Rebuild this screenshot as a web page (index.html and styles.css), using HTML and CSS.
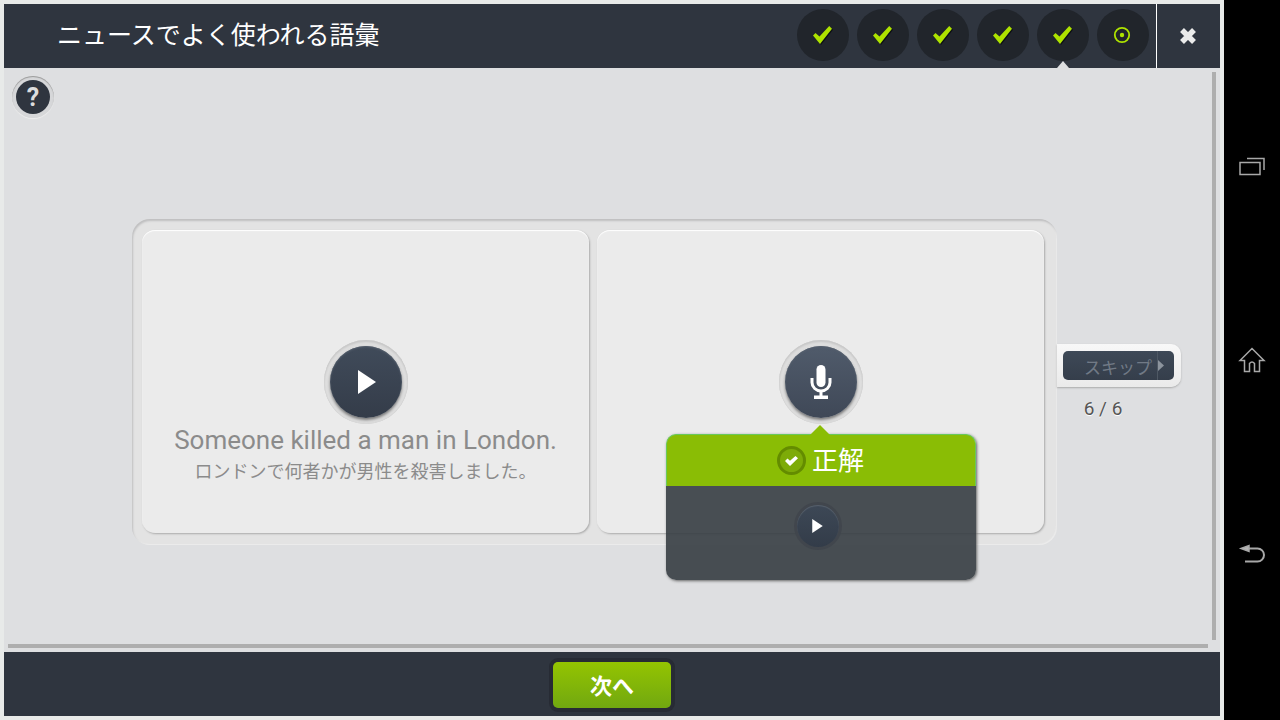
FILE: index.html
```
<!DOCTYPE html>
<html lang="ja">
<head>
<meta charset="UTF-8">
<meta name="viewport" content="width=device-width, initial-scale=1">
<title>ニュースでよく使われる語彙</title>
<link rel="stylesheet" href="styles.css">
</head>
<body>
	<svg class="defs" aria-hidden="true">
		<symbol id="check" viewBox="0 0 19 18"><path d="M0 9.500L2.500 7l4 3.500L16.200 0 19 2.700 7 18z"/></symbol>
		<symbol id="play" viewBox="0 0 18 24"><path d="M0 0l18 12L0 24z"/></symbol>
	</svg>
	<div class="app">
		<header class="topbar">
			<h1 class="title">ニュースでよく使われる語彙</h1>
			<ol class="steps">
				<li class="step"><svg class="step-check"><use href="#check"/></svg></li>
				<li class="step"><svg class="step-check"><use href="#check"/></svg></li>
				<li class="step"><svg class="step-check"><use href="#check"/></svg></li>
				<li class="step"><svg class="step-check"><use href="#check"/></svg></li>
				<li class="step current"><svg class="step-check"><use href="#check"/></svg></li>
				<li class="step"><svg class="step-dot" viewBox="0 0 18 18"><circle cx="9" cy="9" r="7.200" fill="none" stroke="#aee300" stroke-width="1.800"/><circle cx="9" cy="9" r="2.200" fill="#aee300"/></svg></li>
			</ol>
			<button class="close" type="button" aria-label="閉じる">
				<svg viewBox="0 0 18 18"><path d="M3 3l12 12M15 3l-12 12" stroke="#ebebeb" stroke-width="5.500"/></svg>
			</button>
		</header>

		<main class="main">
			<div class="content">
				<button class="help" type="button" aria-label="ヘルプ"><span>?</span></button>
				<div class="stage">
					<div class="panel">
						<section class="card">
							<button class="round" type="button" aria-label="再生"><span class="disc"><svg class="icon-play"><use href="#play"/></svg></span></button>
							<p class="sentence" lang="en">Someone killed a man in London.</p>
							<p class="translation">ロンドンで何者かが男性を殺害しました。</p>
						</section>
						<section class="card">
							<button class="round" type="button" aria-label="録音">
								<span class="disc mic"><svg class="icon-mic" viewBox="0 0 22 36"><rect x="6.500" y="1" width="9" height="22" rx="4.500" fill="#fff"/><path d="M2 14v4.500a9 8.500 0 0 0 18 0V14" fill="none" stroke="#fff" stroke-width="3"/><path d="M9.500 27h3v4.500H18V35H4v-3.500h5.500z" fill="#fff"/></svg></span>
							</button>
							<!-- 判定結果 -->
							<div class="result">
								<div class="result-head">
									<span class="badge"><svg viewBox="0 0 13 10"><path d="M0 5l2.500-2.500L5 4.800 10.500 0 13 2.300 5 10z"/></svg></span>正解
								</div>
								<div class="result-body">
									<button class="replay" type="button" aria-label="録音を再生"><span class="replay-disc"><svg><use href="#play"/></svg></span></button>
								</div>
							</div>
						</section>
					</div>
					<div class="side">
						<div class="skip-box">
							<button class="skip" type="button"><span class="skip-label">スキップ</span><svg class="skip-arrow" viewBox="0 0 16 29"><path d="M0 9l6 5.500L0 20z"/></svg></button>
						</div>
						<p class="count">6 / 6</p>
					</div>
				</div>
			</div>
			<div class="bar-v"></div>
			<div class="bar-h"></div>
		</main>

		<footer class="bottom">
			<button class="next" type="button">次へ</button>
		</footer>
	</div>

	<nav class="system">
		<button type="button" aria-label="最近使ったアプリ"><svg viewBox="0 0 28 28"><path d="M2 9.500h20v12H2zM9 5.500h17V17" /></svg></button>
		<button type="button" aria-label="ホーム"><svg viewBox="0 0 28 28"><path d="M2 14.500L14 2.500l12 12h-4.500v11h-5v-8q-2.500-3-5 0v8h-5v-11z"/></svg></button>
		<button type="button" aria-label="戻る"><svg viewBox="0 0 28 28"><path d="M11 9.500h8.500a6.500 6.500 0 0 1 0 13H7" stroke-width="2"/><path class="solid" d="M3 9.500l8-3v6z"/></svg></button>
	</nav>
</body>
</html>
```
FILE: styles.css
```
*{box-sizing: border-box;}
html,body{height: 100%;margin: 0;}
body{
	display: flex;
	background: #000;
	font-family: Roboto,"Noto Sans CJK JP",sans-serif;
}
h1,p,ol{margin: 0;padding: 0;font-weight: normal;}
button{
	display: flex;
	align-items: center;
	justify-content: center;
	margin: 0;
	padding: 0;
	border: none;
	background: none;
	font-family: inherit;
	cursor: pointer;
}
svg{display: block;}
.defs{display: none;}

.app{
	flex: 1;
	display: flex;
	flex-direction: column;
	padding: 4px;
	background: #e8eae9;
}

/* header */
.topbar{
	display: flex;
	height: 64px;
	background: #2f353f;
}
.title{
	flex: 1;
	padding-left: 53px;
	font-size: 25px;
	line-height: 64px;
	color: #fff;
	white-space: nowrap;
}
.steps{
	display: flex;
	gap: 8px;
	padding: 5px 7px 0 0;
	list-style: none;
}
.step{
	position: relative;
	display: flex;
	align-items: center;
	justify-content: center;
	width: 52px;
	height: 52px;
	padding: 0 2px 1px 0;
	border-radius: 50%;
	background: #21252b;
}
.current:after{
	content: "";
	position: absolute;
	left: 20px;
	top: 52px;
	border: 6px solid transparent;
	border-top: none;
	border-bottom: 7px solid #dedfe1;
}
.step-check{
	width: 19px;
	height: 18px;
	fill: #aee300;
	filter: drop-shadow(1px 1px 0 #0d1014);
}
.step-dot{width: 18px;height: 18px;}
.close{
	width: 64px;
	padding-right: 2px;
	border-left: 1px solid #fff;
}
.close svg{width: 18px;height: 18px;}

/* content */
.main{
	flex: 1;
	display: grid;
	grid-template-columns: 1fr 4px;
	grid-template-rows: 1fr 4px;
	gap: 4px;
	padding: 4px;
	background: #dedfe1;
}
.content{
	display: flex;
	flex-direction: column;
	gap: 6px;
	padding: 4px 4px 0;
}
.bar-v,.bar-h{background: #aeaeae;}
.help{
	width: 42px;
	height: 42px;
	border-radius: 50%;
	background: #d6d7d9;
	box-shadow: inset 0 1px 1px #999,0 1px 1px #eee;
}
.help span{
	width: 34px;
	height: 34px;
	border-radius: 50%;
	background: #2f353f;
	font: bold 25px/36px Roboto,sans-serif;
	color: #ddd;
}
.stage{
	flex: 1;
	display: flex;
	align-items: center;
	padding: 0 23px 0 120px;
}
.panel{
	flex: 1;
	display: grid;
	grid-template-columns: 1fr 1fr;
	gap: 8px;
	padding: 11px 13px 12px 10px;
	border-radius: 18px;
	background: #e3e3e3;
	box-shadow: inset 1px 2px 2px #bfbfc0,inset -1px -1px 1px #ececec;
}
.card{
	position: relative;
	display: flex;
	flex-direction: column;
	align-items: center;
	padding: 110px 0 45px;
	border-radius: 13px;
	background: #ebebeb;
	box-shadow: inset 0 1px 1px #fff,1px 1px 2px #aaa;
}
.round{
	width: 84px;
	height: 84px;
	border-radius: 50%;
	background: #dedede;
	box-shadow: inset 0 2px 2px #c8c8c8,inset 0 0 1px #bbb;
}
.disc{
	display: flex;
	align-items: center;
	justify-content: center;
	width: 72px;
	height: 72px;
	border-radius: 50%;
	background: linear-gradient(#404b5a,#343c49);
	box-shadow: inset 0 1px 2px #56606e,0 2px 3px #777;
}
.mic{background: linear-gradient(#505b6b,#3f4857);}
.icon-play{
	width: 18px;
	height: 24px;
	margin-left: 2px;
	fill: #fff;
}
.icon-mic{width: 22px;height: 36px;}
.sentence{
	font-size: 26px;
	line-height: 32px;
	color: #8b8b8b;
}
.translation{
	font-size: 18px;
	line-height: 32px;
	color: #8b8b8b;
}

/* result popup, hangs below the microphone */
.result{
	position: absolute;
	left: 50%;
	top: 204px;
	width: 310px;
	transform: translateX(-50%);
	border-radius: 10px;
	box-shadow: 1px 1px 3px #666;
}
.result:before{
	content: "";
	position: absolute;
	left: 144px;
	top: -9px;
	border: 10px solid transparent;
	border-top: none;
	border-bottom: 10px solid #8abd05;
}
.result-head{
	display: flex;
	align-items: center;
	justify-content: center;
	gap: 6px;
	height: 52px;
	border: 1px solid #68c95a;
	border-bottom: none;
	border-radius: 10px 10px 0 0;
	background: #8abd05;
	font-size: 26px;
	line-height: 50px;
	color: #fff;
}
.badge{
	display: flex;
	align-items: center;
	justify-content: center;
	width: 29px;
	height: 29px;
	border: 3px solid #648c00;
	border-radius: 50%;
	background: #7dab08;
}
.badge svg{width: 13px;height: 10px;fill: #fff;}
.result-body{
	display: flex;
	justify-content: center;
	height: 94px;
	padding: 16px 6px 0 0;
	border-radius: 0 0 10px 10px;
	background: rgba(54,61,67,.9);
}
.replay{
	width: 48px;
	height: 48px;
	border-radius: 50%;
	background: #41464d;
}
.replay-disc{
	display: flex;
	align-items: center;
	justify-content: center;
	width: 42px;
	height: 42px;
	border-radius: 50%;
	background: linear-gradient(#3d4856,#333c49);
	box-shadow: inset 0 1px 1px #58616c;
}
.replay-disc svg{width: 11px;height: 14px;fill: #fff;}

/* skip */
.side{width: 124px;}
.skip-box{
	padding: 7px 7px 7px 6px;
	border-radius: 0 10px 10px 0;
	background: linear-gradient(#f8f8f8,#eaeaea);
	box-shadow: 0 1px 2px #aaa;
}
.skip{
	width: 100%;
	height: 29px;
	padding-left: 21px;
	border-radius: 5px;
	background: linear-gradient(#3e4957,#353e4b);
	color: #717a86;
}
.skip-label{
	flex: 1;
	padding-top: 6px;
	font-size: 17px;
	line-height: 23px;
	text-align: left;
	white-space: nowrap;
}
.skip-arrow{
	width: 17px;
	height: 29px;
	border-left: 1px solid #4e5864;
	fill: #8c949d;
}
.count{
	width: 92px;
	margin-top: 10px;
	font-size: 19px;
	line-height: 24px;
	text-align: center;
	color: #555;
	text-shadow: 0 1px 0 #fff;
}

/* footer */
.bottom{
	display: flex;
	align-items: center;
	justify-content: center;
	height: 64px;
	padding-top: 2px;
	background: #2f353f;
}
.next{
	width: 118px;
	height: 46px;
	padding-bottom: 3px;
	border-radius: 5px;
	background: linear-gradient(#94c401,#71a810);
	box-shadow: 0 0 0 4px #272b34;
	font-size: 22px;
	font-weight: bold;
	color: #fff;
}

/* android navigation */
.system{
	display: flex;
	flex-direction: column;
	justify-content: space-between;
	align-items: center;
	width: 56px;
	padding: 153px 0;
}
.system svg{
	width: 28px;
	height: 28px;
	fill: none;
	stroke: #a8a8a8;
	stroke-width: 1.5px;
}
.system .solid{fill: #b5b5b5;}
```
